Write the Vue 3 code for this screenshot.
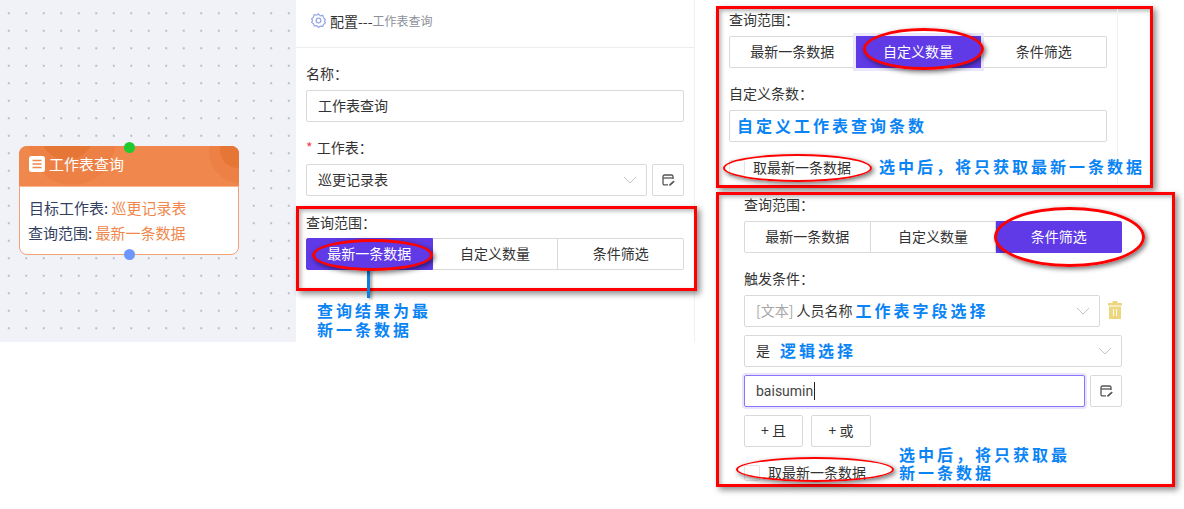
<script setup>
const tabs = ['最新一条数据', '自定义数量', '条件筛选']
</script>

<template>
  <div class="page">
    <section class="canvas">
      <div class="node">
        <span class="port port-in"></span>
        <header class="node-head">
          <span class="blob b1"></span><span class="blob b2"></span><span class="blob b3"></span><span class="blob b4"></span>
          <svg class="node-icon" width="16" height="16" viewBox="0 0 16 16"><rect width="16" height="16" rx="2.500" fill="#fff"/><path d="M3.500 4.500h9M3.500 8h9M3.500 11.500h9" stroke="#f0884d" stroke-width="1.600"/></svg>
          <span>工作表查询</span>
        </header>
        <div class="node-body">
          <p class="line-a">目标工作表: <em>巡更记录表</em></p>
          <p>查询范围: <em>最新一条数据</em></p>
        </div>
        <span class="port port-out"></span>
      </div>
    </section>

    <section class="config">
      <header class="config-head">
        <svg width="15" height="15" viewBox="0 0 24 24" fill="none" stroke="#97a8e8" stroke-width="2"><path d="M12 1.500l2.800 3 4-.8 1.200 3.900 3 2.800-1.500 2.600 1.500 2.600-3 2.800-1.200 3-4-.2L12 23l-2.800-2.800-4 .2-1.200-3-3-2.800 1.500-2.600L1 9.400l3-2.800 1.200-3.900 4 .8z"/><circle cx="12" cy="12" r="3.800"/></svg>
        <span class="title">配置---</span><span class="subtitle">工作表查询</span>
      </header>
      <div class="form">
        <label class="lbl">名称：</label>
        <div class="box"><span class="val">工作表查询</span></div>
        <label class="lbl"><i class="req">*</i> 工作表：</label>
        <div class="with-btn">
          <div class="box grow">
            <span class="val">巡更记录表</span>
            <svg class="chev" width="14" height="8" viewBox="0 0 14 8" fill="none"><path d="M1 1l6 6 6-6" stroke="#c4c4c4"/></svg>
          </div>
          <button class="icon-btn">
            <svg width="13" height="12" viewBox="0 0 13 12" fill="none" stroke="#555" stroke-width="1.300"><path d="M6 10.900H2.500A1.500 1.500 0 0 1 1 9.400V2.500A1.500 1.500 0 0 1 2.500 1h7A1.500 1.500 0 0 1 11 2.500V5"/><path d="M1 4h10"/><path d="M7.500 10.500l4-3.500.8.800-4 3.500H7.500z" fill="#555" stroke-width=".8"/></svg>
          </button>
        </div>
        <div class="frame frame-a">
          <label class="lbl tight">查询范围：</label>
          <div class="seg">
            <div v-for="(t, i) in tabs" :key="t" class="seg-item" :class="{ active: i === 0 }">{{ t }}</div>
          </div>
        </div>
        <div class="note note-a">查询结果为最<br>新一条数据</div>
      </div>
    </section>

    <section class="shots">
      <div class="frame frame-b">
        <div class="shot-edge"></div>
        <label class="lbl tight">查询范围：</label>
        <div class="seg">
          <div v-for="(t, i) in tabs" :key="t" class="seg-item" :class="{ active: i === 1, ring: i === 1 }">{{ t }}</div>
        </div>
        <label class="lbl">自定义条数：</label>
        <div class="box"><span class="note">自定义工作表查询条数</span></div>
        <div class="check-row">
          <span class="check"></span><span class="check-text">取最新一条数据</span>
          <span class="note check-note">选中后，将只获取最新一条数据</span>
        </div>
      </div>

      <div class="frame frame-c">
        <label class="lbl tight">查询范围：</label>
        <div class="seg">
          <div v-for="(t, i) in tabs" :key="t" class="seg-item" :class="{ active: i === 2 }">{{ t }}</div>
        </div>
        <label class="lbl">触发条件：</label>
        <div class="with-btn">
          <div class="box grow">
            <span class="val"><span class="muted">[文本]</span> 人员名称</span><span class="note field-note">工作表字段选择</span>
            <svg class="chev" width="14" height="8" viewBox="0 0 14 8" fill="none"><path d="M1 1l6 6 6-6" stroke="#c4c4c4"/></svg>
          </div>
          <svg class="trash" width="14" height="18" viewBox="0 0 14 18"><path d="M4.500 0h5v2H14v2.500H0V2h4.500z" fill="#eed67f"/><path d="M1 5.500h12V18H1z" fill="#eed67f"/><path d="M5.500 8v7M8.500 8v7" stroke="#fff"/></svg>
        </div>
        <div class="box row-gap">
          <span class="val">是</span><span class="note logic-note">逻辑选择</span>
          <svg class="chev" width="14" height="8" viewBox="0 0 14 8" fill="none"><path d="M1 1l6 6 6-6" stroke="#c4c4c4"/></svg>
        </div>
        <div class="with-btn row-gap">
          <div class="box grow focused"><span class="val latin">baisumin</span><span class="caret"></span></div>
          <button class="icon-btn">
            <svg width="13" height="12" viewBox="0 0 13 12" fill="none" stroke="#555" stroke-width="1.300"><path d="M6 10.900H2.500A1.500 1.500 0 0 1 1 9.400V2.500A1.500 1.500 0 0 1 2.500 1h7A1.500 1.500 0 0 1 11 2.500V5"/><path d="M1 4h10"/><path d="M7.500 10.500l4-3.500.8.800-4 3.500H7.500z" fill="#555" stroke-width=".8"/></svg>
          </button>
        </div>
        <div class="add-row">
          <button class="add add-and">+ 且</button>
          <button class="add add-or">+ 或</button>
        </div>
        <div class="check-row">
          <span class="check"></span><span class="check-text">取最新一条数据</span>
          <span class="note check-note-c">选中后，将只获取最<br>新一条数据</span>
        </div>
      </div>
    </section>

    <span class="pointer"></span>
    <span class="oval o1"></span>
    <span class="oval o2"></span>
    <span class="oval thin o3"></span>
    <span class="oval o4"></span>
    <span class="oval thin o5"></span>
  </div>
</template>

<style scoped>
* { box-sizing: border-box; }
.page {
  position: relative;
  display: flex;
  align-items: flex-start;
  width: 1184px;
  height: 509px;
  overflow: hidden;
  background: #fff;
  color: #333;
  font: 14px/20px "Noto Sans CJK SC", "Liberation Sans", sans-serif;
}
p, label { margin: 0; display: block; }
em { font-style: normal; color: #f0884d; }
i { font-style: normal; }
button { font: inherit; color: inherit; background: #fff; }

.canvas {
  flex: none;
  width: 296px;
  height: 342px;
  padding: 146px 0 0 19px;
  background-color: #f0f2f7;
  background-image: radial-gradient(circle at center, #b9bcc4 0.7px, transparent 1px);
  background-size: 17.5px 17.5px;
  background-position: 0 4.500px;
}
.node {
  position: relative;
  width: 220px;
  height: 109px;
  background: #fff;
  border: 1px solid #f3a074;
  border-radius: 8px;
}
.node-head {
  position: relative;
  display: flex;
  align-items: center;
  gap: 4px;
  height: 41px;
  margin: -1px -1px 0;
  padding: 0 0 4px 10px;
  overflow: hidden;
  border-radius: 8px 8px 0 0;
  border-bottom: 1px solid #f7b48f;
  background: #f0884d;
  color: #fff;
  font-size: 15px;
}
.node-head > svg, .node-head > span:not(.blob) { position: relative; }
.blob { position: absolute; border-radius: 50%; }
.b1 { width: 86px; height: 86px; left: 10px; top: -47px; background: #ec8045; }
.b2 { width: 54px; height: 54px; left: 21px; top: -40px; background: #e67636; }
.b3 { width: 62px; height: 62px; left: 190px; top: -25px; background: #ec8045; }
.b4 { width: 36px; height: 36px; left: 201px; top: -14px; background: #e67636; }
.node-body { padding: 8px 0 0 8px; color: #33405f; font-size: 15px; line-height: 25px; }
.line-a { padding-left: 1px; }
.port { position: absolute; left: 104px; width: 11px; height: 11px; border-radius: 50%; z-index: 1; }
.port-in { top: -5px; background: #1fc92e; }
.port-out { bottom: -6px; background: #6e96ff; }

.config {
  flex: none;
  width: 399px;
  height: 342px;
  border-right: 1px solid #f0f0f0;
}
.config-head {
  display: flex;
  align-items: center;
  height: 48px;
  padding: 0 0 6px 15px;
  border-bottom: 1px solid #eee;
}
.title { margin-left: 4px; color: #333; }
.subtitle { font-size: 12px; color: #8b8f98; }
.form { padding: 0 10px; }
.lbl { margin: 15px 0 7px; }
.lbl.tight { margin-top: 0; margin-bottom: 6px; }
.req { color: #f04444; margin-right: 1px; }
.box {
  position: relative;
  display: flex;
  align-items: center;
  height: 32px;
  padding-left: 11px;
  border: 1px solid #d9d9d9;
  border-radius: 2px;
  background: #fff;
}
.grow { flex: 1; min-width: 0; }
.val { white-space: nowrap; margin-bottom: 2px; }
.latin { font-family: Roboto, "Liberation Sans", sans-serif; margin-bottom: 0; color: #444; }
.muted { color: #a6a6a6; }
.chev { position: absolute; right: 9px; top: 11px; }
.with-btn { display: flex; align-items: center; gap: 5px; }
.icon-btn {
  flex: none;
  display: flex;
  align-items: center;
  justify-content: center;
  width: 32px;
  height: 32px;
  padding: 0;
  border: 1px solid #d9d9d9;
  border-radius: 2px;
}

.frame {
  position: relative;
  border: 3px solid #f00;
  box-shadow: 3px 3px 6px rgba(0, 0, 0, .45), inset 2px 2px 4px rgba(0, 0, 0, .3);
  background: #fff;
}
.frame-a { width: 401px; height: 85px; margin: 10px 0 0 -10px; padding: 3px 0 0 7px; }
.frame-a .lbl { margin-bottom: 6px; }
.seg { display: flex; width: 378px; height: 32px; }
.seg-item {
  flex: 1;
  display: flex;
  align-items: center;
  justify-content: center;
  padding-bottom: 2px;
  border: 1px solid #d9d9d9;
  border-left-width: 0;
  background: #fff;
}
.seg-item:first-child { border-left-width: 1px; border-radius: 2px 0 0 2px; }
.seg-item:last-child { border-radius: 0 2px 2px 0; }
.seg-item.active { background: #5f3ae6; border-color: #5f3ae6; color: #fff; }
.seg-item.ring { position: relative; box-shadow: 0 0 0 3px #ece8fb; }

.note {
  color: #0a84f5;
  font-size: 16px;
  font-weight: 700;
  line-height: 19px;
  letter-spacing: 3px;
}
.note-a { margin: 10px 0 0 11px; }
.box > .note { margin-bottom: 2px; }

.shots { flex: none; margin: 6px 0 0 21px; display: flex; flex-direction: column; gap: 4px; }
.frame-b { width: 437px; height: 182px; padding: 0 0 0 10px; }
.frame-b .lbl.tight { margin-bottom: 7px; }
.shot-edge { position: absolute; left: 398px; top: 0; bottom: 0; width: 1px; background: #f2f2f2; }
.frame-b .box { width: 378px; padding-left: 7px; }
.frame-c { width: 459px; height: 295px; padding: 0 0 0 25px; overflow: hidden; }
.frame-c .lbl.tight { margin-bottom: 7px; margin-top: -1px; }
.frame-c .seg, .frame-c .with-btn, .frame-c .row-gap { width: 378px; }
.row-gap { margin-top: 8px; }
.trash { flex: none; margin: 0 0 2px 3px; }
.field-note { margin-left: 3px; }
.logic-note { margin-left: 10px; }
.focused { border-color: #8f74f7; box-shadow: 0 0 0 2px #e9e4fd; }
.caret { width: 1px; height: 18px; margin-left: 1px; background: #222; }
.add-row { display: flex; gap: 8px; margin-top: 8px; }
.add { height: 32px; padding: 0 0 2px; border: 1px solid #d9d9d9; border-radius: 2px; }
.add-and { width: 59px; }
.add-or { width: 60px; }

.check-row { position: relative; display: flex; align-items: center; margin-top: 16px; height: 20px; }
.check {
  width: 16px;
  height: 16px;
  margin: 0 8px 0 0;
  border: 1px solid #e3e3e3;
  border-radius: 2px;
  background: #fff;
}
.check-text { margin-bottom: 2px; }
.check-note { position: absolute; left: 150px; top: -1px; white-space: nowrap; }
.check-note-c { position: absolute; left: 155px; top: -18px; white-space: nowrap; line-height: 18px; }

.pointer {
  position: absolute;
  left: 367px;
  top: 270px;
  width: 3px;
  height: 28px;
  background: #0f7fdc;
  box-shadow: 2px 1px 3px rgba(0, 0, 0, .4);
}
.oval {
  position: absolute;
  border: 3px solid #f00;
  border-radius: 50%;
  box-shadow: 2px 2px 5px rgba(0, 0, 0, .55);
  pointer-events: none;
}
.oval.thin { border-width: 2px; }
.o1 { left: 312px; top: 239px; width: 121px; height: 32px; }
.o2 { left: 863px; top: 28px; width: 121px; height: 42px; }
.o3 { left: 723px; top: 154px; width: 149px; height: 28px; }
.o4 { left: 994px; top: 207px; width: 151px; height: 60px; }
.o5 { left: 736px; top: 457px; width: 158px; height: 25px; }
</style>
